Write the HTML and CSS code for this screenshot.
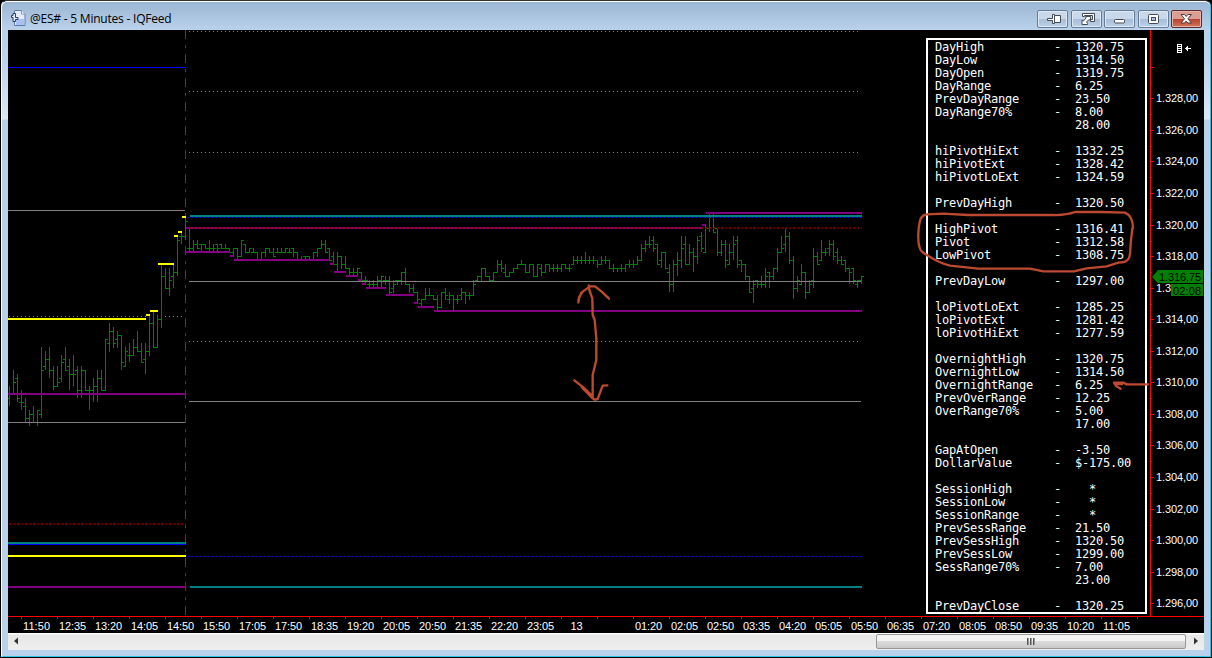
FILE: index.html
```html
<!DOCTYPE html>
<html lang="en">
<head>
<meta charset="utf-8">
<title>@ES# - 5 Minutes - IQFeed</title>
<link rel="stylesheet" href="styles.css">
</head>
<body>
<div class="window">
  <header class="titlebar">
    <svg class="app-icon" viewBox="0 0 15 16"><path d="M3.500 .5h7l3.500 3.500v11.500H3.500z" fill="#e3ebfb" stroke="#5d7fae"/><path d="M10.500 .5v3.500H14" fill="#fff" stroke="#7896c0"/><path d="M5 9h8v6H5z" fill="#a9c0f0"/><path d="M.5 5.500H2v-2h2.500v4H7v2H4.500v2H2v-4H.5z" fill="#dfeaff" stroke="#243f70"/></svg>
    <h1 class="title">@ES# - 5 Minutes - IQFeed</h1>
    <div class="controls">
      <button class="control"><svg viewBox="0 0 29 16"><path d="M9.500 7.500h5v-4h2v1h6v7h-6v1h-2v-3h-5z" fill="#fff" stroke="#454b55"/><path d="M16.500 4.500v7" stroke="#454b55"/></svg></button>
      <button class="control"><svg viewBox="0 0 29 16"><path d="M10.500 2.500h12v8h-4v-2h2v-4h-8v1h-2z" fill="#fff" stroke="#454b55"/><path d="M13.500 5.500h5v4l-1.500-1-2.500 2.500 1 1.500v1H10V9l1.500 1 2.500-3z" fill="#fff" stroke="#454b55"/></svg></button>
      <button class="control"><svg viewBox="0 0 29 16"><rect x="9.500" y="8.500" width="10" height="3.500" rx="1" fill="#fff" stroke="#454b55"/></svg></button>
      <button class="control"><svg viewBox="0 0 29 16"><rect x="9.500" y="3.500" width="10" height="9" rx="1" fill="#fff" stroke="#454b55"/><rect x="12.500" y="6.500" width="4" height="3" fill="#a9bfda" stroke="#454b55"/></svg></button>
      <button class="control close"><svg viewBox="0 0 29 16"><path d="M9 3.500h3.500l1.700 2 1.700-2h3.500l-3.500 4.300 3.500 4.200h-3.500l-1.700-2-1.700 2H9l3.500-4.200z" fill="#fff" stroke="#4a3b46"/></svg></button>
    </div>
  </header>
  <main class="chart">
    <svg class="plot" viewBox="8 30 1196 603">
      <g class="session"><path d="M185.500 30V616"/></g>
      <g class="dotted"><path d="M189 31.500H861M189 91.500H861M189 152.500H861M189 341.500H861"/><path d="M9 316.500H184"/></g>
      <g class="bars"><path id="bars"/></g>
      <g class="level"><path d="M8 210.500H185M8 422.500H185M189 281.500H861M189 401.500H861"/></g>
      <g class="purple"><path d="M8 394H186M8 587H186M186 228H702M702 225h4M706 213H862M186 252h44M230 256h4M234 260h96M330 264h4M334 272h12M346 276h12M358 280h4M362 284h4M366 288h20M386 295h28M414 303h4M418 307h16M434 311H862"/></g>
      <g class="teal"><path d="M190 216H862M8 543H186M190 587H862"/></g>
      <g class="blue"><path d="M8 67.500H186M187 217.500H862M8 544.500H186M187 556.500H862"/></g>
      <g class="red-thin"><path d="M190 227.500H862M10 523.500H186"/></g>
      <g class="red-wide"><path d="M189 228.500H862M9 524.500H186"/></g>
      <g class="yellow"><path d="M8 319H146M146 315h4M150 311h8M158 264h16M174 236h4M178 232h4M182 217h4M8 556H186"/></g>
      <g class="axis"><path id="ticks" d="M8 616.500H1204M1150.500 30V616"/></g>
      <g id="labels" class="labels"></g>
      <g class="tag"><path d="M1152 277l6-7h45v13h-45zM1171 284h32v12h-32z"/><text x="1159" y="281" textLength="42">1.316,75</text><text x="1173" y="295" textLength="28">02:08</text></g>
      <g class="marker"><path d="M1177.500 44.500h4v8h-4zM1178 46.500h3M1178 48.500h3M1178 50.500h3M1185 48.500h6M1186.500 47v3M1187.500 46v5"/></g>
    </svg>
    <section id="panel" class="panel"></section>
    <svg class="ink" viewBox="8 30 1196 603">
      <g transform="translate(900 200) scale(.33333)"><path d="M699 85C699 60 692 45 675 38L600 36H525C500 45 480 46 460 45H205L130 41 80 43C60 47 60 60 56 85C53 120 55 148 68 157C90 172 120 190 150 197L235 206H390L430 214H522L560 205 620 199 655 188C695 188 690 165 692 130L697 85"/></g>
      <g transform="translate(540 270) scale(.33333)"><path d="M115 97L118 80 128 65 146 52M115 90L124 68M146 46L148 60 157 85 158 135 164 150 169 205V270L158 315V380M146 49H165L185 65 207 86M103 331L130 352 158 379M125 351L158 385 164 389 173 387 188 347 202 346M130 357L156 377"/></g>
      <g transform="translate(920 340) scale(.33333)"><path d="M685 133H620L610 128H582L588 138 602 146M584 132H606"/></g>
    </svg>
  </main>
  <div class="scrollbar">
    <svg class="arrow" viewBox="0 0 17 17"><path d="M10 4.500v7L6 8z"/></svg>
    <div class="track"><div class="thumb"><i></i><i></i><i></i></div></div>
    <svg class="arrow" viewBox="0 0 17 17"><path d="M7 4.500v7L11 8z"/></svg>
  </div>
</div>
<script src="chart.js"></script>
</body>
</html>
```
FILE: styles.css
```css
* { box-sizing: border-box; }
body { margin: 0; background: #000; overflow: hidden; font-family: "Liberation Sans", Arial, sans-serif; }
.window {
  width: 1210px; height: 657px; margin-left: 1px; padding: 1px 6px 6px 6px;
  display: flex; flex-direction: column;
  border: 1px solid; border-color: #333 #2cc8e6 #2cc8e6 #fff; border-radius: 6px 6px 0 0;
  background: linear-gradient(#9ab5d2 0, #b9d1ea 28px, #bdd4ec 60px, #dbe8f5 118px, #b9d1ea 119px);
  box-shadow: inset 0 1px #fff;
}
.titlebar { height: 28px; flex: none; display: flex; align-items: flex-start; }
.app-icon { width: 15px; height: 16px; margin: 8px 0 0 3px; }
.title { margin: 8px 0 0 4px; font: 12px/18px "Open Sans", sans-serif; letter-spacing: -.22px; color: #000; white-space: nowrap; }
.controls { display: flex; gap: 2.5px; margin: 8px 2px 0 auto; }
.control {
  width: 31px; height: 18px; padding: 0; display: flex;
  border: 1px solid #667b96; border-radius: 2px;
  background: linear-gradient(#c9d9eb 0 48%, #a6bdd8 50%, #bdd1e8);
  box-shadow: inset 0 0 0 1px #dfe9f5;
}
.control svg { width: 29px; height: 16px; }
.close { border-color: #5a2a30; background: linear-gradient(#dc9d92 0 48%, #b8402c 50%, #cf7558); box-shadow: inset 0 0 0 1px #e5b4aa; }
.chart { position: relative; width: 1196px; height: 603px; flex: none; background: #000; }
.plot, .ink { display: block; width: 1196px; height: 603px; }
.ink { position: absolute; inset: 0; fill: none; stroke: #bd4a30; stroke-width: 7; stroke-linecap: round; stroke-linejoin: round; }
.plot path { shape-rendering: crispEdges; fill: none; }
.session { stroke: #404040; stroke-dasharray: 9 6 3 6; }
.dotted { stroke: #808080; stroke-dasharray: 1 3; }
.bars { stroke: #008000; }
.level { stroke: #808080; }
.purple { stroke: #800080; stroke-width: 2; }
.teal { stroke: #008080; stroke-width: 2; }
.blue { stroke: #0000ff; stroke-dasharray: 3 1; }
.red-thin { stroke: #800000; stroke-dasharray: 1 3; }
.red-wide { stroke: #800000; stroke-dasharray: 2 2; }
.yellow { stroke: #ffff00; stroke-width: 2; }
.axis { stroke: #ff0000; }
.labels { fill: #fff; font-size: 11px; }
.center { text-anchor: middle; }
.tag { font-size: 11px; }
.plot .tag path { fill: #008000; shape-rendering: auto; }
.marker { stroke: #fff; }
.panel {
  position: absolute; left: 918px; top: 8px; width: 221px; height: 576px; padding: 1px 0 0 7px;
  border: 2px solid #fff; color: #fff;
  font: 12px/13px "DejaVu Sans Mono", monospace; letter-spacing: -.224px;
}
.row { display: grid; grid-template-columns: 119px 21px 1fr; height: 13px; white-space: pre; }
.scrollbar { height: 17px; flex: none; width: 1196px; display: flex; background: linear-gradient(#fff 0 1px, #e6e6e6 2px, #efefef); }
.arrow { width: 17px; height: 17px; fill: #333; }
.track { flex: 1; display: flex; justify-content: flex-end; padding: 1px 1px 1px 0; }
.thumb {
  width: 310px; height: 15px; display: flex; gap: 1px; align-items: center; justify-content: center;
  border: 1px solid #979797; border-radius: 2px; background: linear-gradient(#f3f3f3 0 45%, #dcdcdc 50%, #c9c9c9);
}
.thumb i { width: 2px; height: 7px; background: linear-gradient(90deg, #555 50%, #999 50%); }
```
FILE: chart.js
```js
// One entry per 5-minute bar: open, high, low, close, as depth below the
// y = 200 grid line in thirds of a pixel.
const series = `595 558 620 582,582 510 582 547,535 522 608 595,607 570 632 607,619 594 667 655,655 630 680 643,643 618 667 667,667 630 680 630,643 441 656 510,499 453 512 478,478 441 536 511,511 498 572 559,559 498 560 547,535 465 548 487,478 441 512 511,499 477 572 523,523 465 560 523,511 498 596 571,571 498 596 511,511 510 572 571,571 558 632 571,571 534 608 559,559 510 608 535,535 510 572 571,571 417 572 418,430 369 456 394,394 381 444 430,418 393 444 406,406 405 512 487,499 441 500 454,466 429 488 466,466 417 468 442,442 393 456 454,454 429 488 487,478 429 524 454,454 348 468 370,370 336 444 442,442 345 444 358,358 192 384 229,229 204 266 265,265 204 288 241,229 192 266 217,217 108 230 121,109 100 134 109,109 52 122 64,
145 87 153 145,145 120 153 133,133 120 147 145,133 132 153 133,133 132 147 145,145 120 153 145,145 132 153 145,133 132 153 145,133 132 147 145,145 132 147 145,145 144 159 157,157 144 166 145,145 144 178 169,169 120 171 121,133 132 159 157,157 144 159 145,157 144 159 157,157 156 178 178,178 156 178 157,157 144 171 145,145 144 159 157,157 144 171 169,157 144 159 157,157 144 159 157,157 144 159 145,157 144 159 157,145 144 171 157,157 156 178 178,178 168 178 178,169 168 178 169,169 168 178 178,178 156 178 157,157 144 171 145,145 120 145 133,133 120 157 157,145 144 181 181,169 156 193 193,193 156 213 169,169 168 207 193,193 168 207 205,205 204 225 217,217 204 225 217,217 204 225 205,217 216 243 241,241 228 249 241,253 240 261 253,253 240 261 253,253 228 261 241,241 228 261 229,241 228 255 241,241 228 282 277,265 240 279 253,241 240 255 241,241 216 255 217,217 204 255 253,253 252 279 265,265 252 279 277,277 276 306 298,
310 297 318 298,298 264 300 286,286 264 286 286,286 285 298 298,298 285 330 322,322 276 323 277,277 264 300 286,298 276 312 286,286 285 330 298,298 285 312 298,286 264 300 277,277 276 312 286,286 276 300 286,286 240 286 253,241 228 243 229,229 204 243 205,205 204 230 229,229 228 243 241,241 216 243 217,217 180 217 193,193 180 218 205,217 192 230 229,229 216 230 217,217 204 217 205,205 192 205 193,193 180 193 193,193 192 218 217,217 192 217 193,193 192 230 229,229 192 230 193,205 192 230 217,217 192 218 193,193 192 218 205,205 192 218 205,205 192 218 205,205 192 217 193,193 192 205 205,205 192 218 205,193 168 193 181,181 168 193 181,181 168 193 181,181 156 193 181,181 168 193 181,181 168 193 181,181 180 206 193,193 168 193 181,181 168 193 181,181 180 206 205,205 192 218 205,205 204 218 205,205 192 218 205,205 192 218 193,193 180 206 193,
193 180 206 193,193 168 193 181,181 132 182 145,145 120 158 133,133 108 146 133,121 108 158 145,133 132 194 193,181 156 206 157,157 156 206 205,217 192 278 253,253 180 278 193,193 156 230 181,181 108 206 145,133 108 194 193,193 132 194 157,157 144 218 169,169 108 194 121,109 96 158 145,157 78 158 85,85 42 98 52,52 42 98 97,85 84 170 157,157 120 170 133,133 120 206 181,193 132 194 157,157 108 182 133,121 108 206 193,181 180 218 193,193 192 242 229,229 228 278 277,265 240 311 253,241 240 266 253,253 228 266 253,253 204 266 229,217 216 266 229,229 204 242 205,205 144 218 157,157 108 158 145,133 84 158 109,109 96 194 181,181 168 299 265,265 228 278 241,253 192 254 217,217 216 299 277,277 240 278 253,241 144 266 169,169 156 194 193,181 120 182 157,157 144 170 157,145 120 170 133,133 120 182 169,157 144 194 181,181 168 194 193,181 180 218 205,205 204 254 217,205 204 254 241,253 240 266 241,241 228 254 229`;

const px = v => 200 + Math.floor(v / 3);
let d = '';
series.split(',').forEach((entry, i) => {
  const [open, high, low, close] = entry.trim().split(' ').map(Number);
  const x = 9 + 4 * i;
  d += `M${Math.max(8, x - 2)} ${px(open) + .5}H${x + 1}M${x + .5} ${px(high)}V${Math.max(px(low), px(close) + 1)}M${x} ${px(close) + .5}h3`;
});
document.getElementById('bars').setAttribute('d', d);

// Axis ticks and labels
const labels = document.getElementById('labels');
const ticks = document.getElementById('ticks');
let t = ticks.getAttribute('d');
function label(text, x, y, length, cls) {
  const el = document.createElementNS('http://www.w3.org/2000/svg', 'text');
  el.setAttribute('x', x);
  el.setAttribute('y', y);
  el.setAttribute('textLength', length);
  if (cls) el.setAttribute('class', cls);
  el.textContent = text;
  labels.append(el);
}
for (let i = -1; i <= 16; i++) {
  const y = Math.round(98.3 + i * 31.56);
  t += `M1151 ${y + .5}h3`;
  if (i < 16) t += `M1151 ${Math.round(y + 15.8) + .5}h1`;
  // The countdown box takes the room of the 1.316,00 label after its first digits.
  if (i === 6) label('1.3', 1156, y + 4, 15);
  else if (i >= 0) label(`1.${328 - 2 * i},00`, 1156, y + 4, 42);
}
const times = '11:50 12:35 13:20 14:05 14:50 15:50 17:05 17:50 18:35 19:20 20:05 20:50 21:35 22:20 23:05 13 - 01:20 02:05 02:50 03:35 04:20 05:05 05:50 06:35 07:20 08:05 08:50 09:35 10:20 11:05 -'.split(' ');
times.forEach((time, i) => {
  t += `M${21.5 + 36 * i} 617v2`;
  if (time !== '-') label(time, 36.5 + 36 * i, 630, time.length > 2 ? 27 : 12, 'center');
});
ticks.setAttribute('d', t);

// Session statistics
const rows = `DayHigh|1320.75
DayLow|1314.50
DayOpen|1319.75
DayRange|6.25
PrevDayRange|23.50
DayRange70%|8.00
|28.00

hiPivotHiExt|1332.25
hiPivotExt|1328.42
hiPivotLoExt|1324.59

PrevDayHigh|1320.50

HighPivot|1316.41
Pivot|1312.58
LowPivot|1308.75

PrevDayLow|1297.00

loPivotLoExt|1285.25
loPivotExt|1281.42
loPivotHiExt|1277.59

OvernightHigh|1320.75
OvernightLow|1314.50
OvernightRange|6.25
PrevOverRange|12.25
OverRange70%|5.00
|17.00

GapAtOpen|-3.50
DollarValue|$-175.00

SessionHigh|  *
SessionLow|  *
SessionRange|  *
PrevSessRange|21.50
PrevSessHigh|1320.50
PrevSessLow|1299.00
SessRange70%|7.00
|23.00

PrevDayClose|1320.25`.split('\n');
document.getElementById('panel').innerHTML = rows.map(r => {
  const [name, value = ''] = r.split('|');
  return `<div class="row"><span>${name}</span><span>${name ? '-' : ''}</span><span>${value}</span></div>`;
}).join('');
```
